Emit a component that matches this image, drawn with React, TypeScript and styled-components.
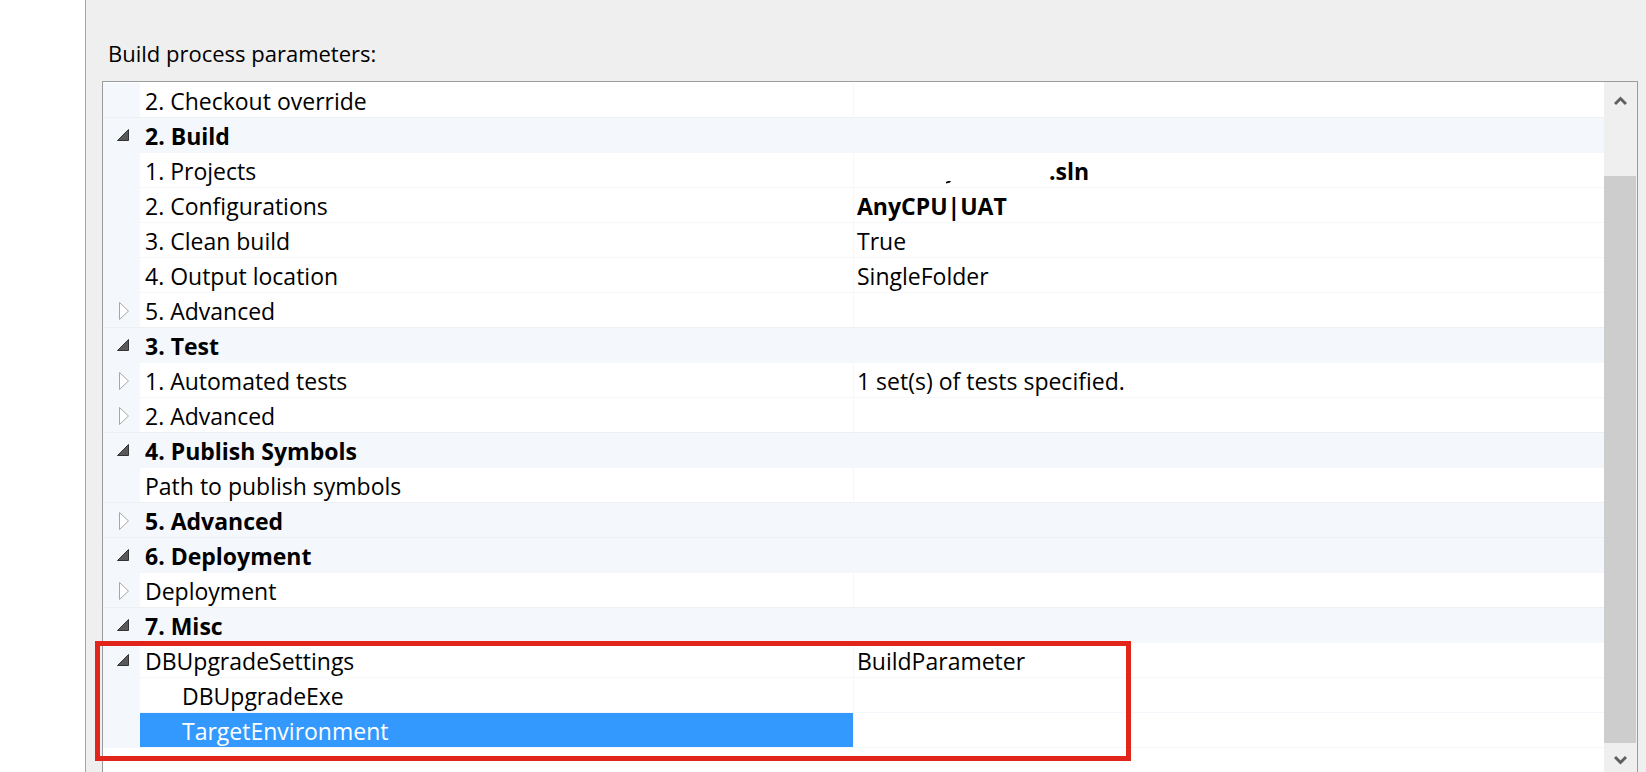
import React from "react";
import styled, { createGlobalStyle, css } from "styled-components";

const GlobalStyle = createGlobalStyle`
  *, *::before, *::after { box-sizing: border-box; }
  body {
    margin: 0;
    background: #ffffff;
    color: #000000;
    font-family: "Open Sans", "Noto Sans", sans-serif;
    font-size: 23px;
    line-height: 32px;
  }
`;

const Page = styled.div`
  display: flex;
  height: 100vh;
  padding-left: 85px;
  overflow: hidden;
`;

const Panel = styled.section`
  display: flex;
  flex: 1;
  flex-direction: column;
  min-width: 0;
  padding: 37px 8px 0 16px;
  border-left: 1px solid #a5a5a5;
  background: #efefef;
`;

const Heading = styled.h1`
  margin: 0;
  padding: 0 0 12px 6px;
  font-size: 22px;
  font-weight: 400;
  line-height: 32px;
`;

const GridFrame = styled.div`
  position: relative;
  display: flex;
  flex: 1;
  min-height: 0;
  border: 1px solid #999b9e;
  border-bottom: 0;
  background: #ffffff;
`;

const GridBody = styled.div`
  flex: 1;
  min-width: 0;
  padding-top: 1px;
`;

const Table = styled.table`
  width: 100%;
  table-layout: fixed;
  border-collapse: separate;
  border-spacing: 0;
`;

const GutterCol = styled.col`
  width: 37px;
`;

const NameCol = styled.col`
  width: 47.5%;
`;

const Gutter = styled.td`
  height: 35px;
  padding: 0;
  border-bottom: 1px solid #f4f7fc;
  background: #f4f7fc;
`;

const cell = css`
  height: 35px;
  padding: 2px 0 0;
  border-bottom: 1px solid #f4f7fc;
  overflow: hidden;
  text-align: left;
  white-space: nowrap;
  font-weight: 400;
`;

const NameCell = styled.th<{ $child?: boolean; $selected?: boolean }>`
  ${cell}
  padding-left: ${(p) => (p.$child ? 42 : 5)}px;
  color: ${(p) => (p.$selected ? "#ffffff" : "inherit")};
  background: ${(p) => (p.$selected ? "#3399ff" : "transparent")};
  background-clip: padding-box;
`;

const ValueCell = styled.td<{ $bold?: boolean }>`
  ${cell}
  padding-left: 3px;
  border-left: 1px solid #f4f7fc;
  font-weight: ${(p) => (p.$bold ? 700 : 400)};
`;

const CategoryCell = styled.th`
  ${cell}
  padding-left: 5px;
  background: #f4f7fc;
  font-weight: 700;
`;

const Row = styled.tr<{ $beforeCategory?: boolean }>`
  ${(p) =>
    p.$beforeCategory &&
    css`
      > * {
        border-bottom-color: #eeeff1;
      }
    `}
`;

const Expander = styled.button`
  display: block;
  width: 37px;
  height: 34px;
  padding: 8px 0 6px 14px;
  border: 0;
  background: none;

  svg {
    display: block;
  }
`;

const Redacted = styled.span`
  display: grid;
  grid-template-columns: 89px 103px auto;
  align-items: center;

  svg {
    display: block;
    margin-top: 23px;
  }
`;

const ScrollBar = styled.div`
  display: flex;
  flex-direction: column;
  width: 33px;
  padding-right: 1px;
  background: #efefef;
`;

const ScrollButton = styled.button<{ $end?: boolean }>`
  display: flex;
  flex: none;
  justify-content: center;
  width: 32px;
  height: ${(p) => (p.$end ? 29 : 34)}px;
  padding: ${(p) => (p.$end ? 12 : 14)}px 0 0;
  border: 0;
  background: none;
`;

const Track = styled.div`
  display: flex;
  flex: 1;
  padding-top: 60px;
`;

const Thumb = styled.div`
  flex: 1;
  background: #cdcdcd;
`;

const Highlight = styled.div`
  position: absolute;
  top: 559px;
  left: -8px;
  width: 1036px;
  height: 120px;
  border: 5px solid #e1251b;
  pointer-events: none;
`;

type State = "open" | "closed";

interface Item {
  name: string;
  category?: boolean;
  state?: State;
  value?: React.ReactNode;
  bold?: boolean;
  child?: boolean;
  selected?: boolean;
}

const projectValue = (
  <Redacted>
    <span />
    <svg width="6" height="3" aria-hidden="true">
      <path d="M2 0H5L4 1.5L0 2.5V1Z" fill="#000" />
    </svg>
    <span>.sln</span>
  </Redacted>
);

const items: Item[] = [
  { name: "2. Checkout override" },
  { name: "2. Build", category: true, state: "open" },
  { name: "1. Projects", value: projectValue, bold: true },
  { name: "2. Configurations", value: "AnyCPU|UAT", bold: true },
  { name: "3. Clean build", value: "True" },
  { name: "4. Output location", value: "SingleFolder" },
  { name: "5. Advanced", state: "closed" },
  { name: "3. Test", category: true, state: "open" },
  { name: "1. Automated tests", state: "closed", value: "1 set(s) of tests specified." },
  { name: "2. Advanced", state: "closed" },
  { name: "4. Publish Symbols", category: true, state: "open" },
  { name: "Path to publish symbols" },
  { name: "5. Advanced", category: true, state: "closed" },
  { name: "6. Deployment", category: true, state: "open" },
  { name: "Deployment", state: "closed" },
  { name: "7. Misc", category: true, state: "open" },
  { name: "DBUpgradeSettings", state: "open", value: "BuildParameter" },
  { name: "DBUpgradeExe", child: true },
  { name: "TargetEnvironment", child: true, selected: true },
];

function Arrow({ state }: { state: State }) {
  return state === "open" ? (
    <svg width="18" height="20" aria-hidden="true">
      <path d="M0.5 14.5H11.5V3.5Z" fill="#595959" stroke="#333333" />
    </svg>
  ) : (
    <svg width="18" height="20" aria-hidden="true">
      <path d="M2.5 1.5V18.5L11.5 10Z" fill="#ffffff" stroke="#a6a6a6" />
    </svg>
  );
}

function PropertyRow({ item, beforeCategory }: { item: Item; beforeCategory: boolean }) {
  return (
    <Row $beforeCategory={beforeCategory}>
      <Gutter>
        {item.state && (
          <Expander type="button" aria-label={item.name} aria-expanded={item.state === "open"}>
            <Arrow state={item.state} />
          </Expander>
        )}
      </Gutter>
      {item.category ? (
        <CategoryCell colSpan={2} scope="rowgroup">
          {item.name}
        </CategoryCell>
      ) : (
        <>
          <NameCell scope="row" $child={item.child} $selected={item.selected}>
            {item.name}
          </NameCell>
          <ValueCell $bold={item.bold}>{item.value}</ValueCell>
        </>
      )}
    </Row>
  );
}

export default function App() {
  return (
    <>
      <GlobalStyle />
      <Page>
        <Panel>
          <Heading id="parameters-title">Build process parameters:</Heading>
          <GridFrame>
            <GridBody>
              <Table aria-labelledby="parameters-title">
                <colgroup>
                  <GutterCol />
                  <NameCol />
                  <col />
                </colgroup>
                <tbody>
                  {items.map((item, i) => (
                    <PropertyRow key={i} item={item} beforeCategory={Boolean(items[i + 1]?.category)} />
                  ))}
                </tbody>
              </Table>
            </GridBody>
            <ScrollBar>
              <ScrollButton type="button" aria-label="Scroll up">
                <svg width="13" height="11" aria-hidden="true">
                  <path d="M1 8L6.5 2.5L12 8" fill="none" stroke="#606060" strokeWidth="3" />
                </svg>
              </ScrollButton>
              <Track>
                <Thumb />
              </Track>
              <ScrollButton type="button" aria-label="Scroll down" $end>
                <svg width="13" height="11" aria-hidden="true">
                  <path d="M1 2L6.5 7.5L12 2" fill="none" stroke="#606060" strokeWidth="3" />
                </svg>
              </ScrollButton>
            </ScrollBar>
            <Highlight />
          </GridFrame>
        </Panel>
      </Page>
    </>
  );
}
